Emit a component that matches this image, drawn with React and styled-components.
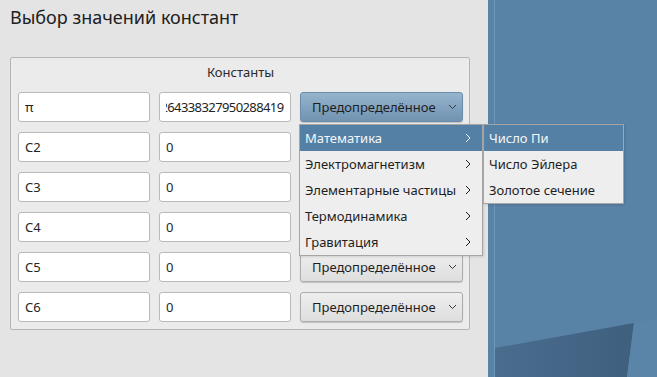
import { useEffect, useRef } from "react";
import styled, { createGlobalStyle } from "styled-components";

const GlobalStyle = createGlobalStyle`
    html, body {
        margin: 0;
        padding: 0;
        width: 657px;
        height: 377px;
        overflow: hidden;
    }
    body {
        font-family: "Noto Sans", "Open Sans", sans-serif;
        font-size: 13px;
        color: #232323;
    }
`;

const Screen = styled.div`
    display: flex;
    width: 657px;
    height: 377px;
`;

const Window = styled.div`
    width: 488px;
    flex-shrink: 0;
    background-color: #e4e4e4;
    padding: 5px 18px 0 10px;
    box-sizing: border-box;
`;

const Title = styled.h1`
    margin: 0;
    font-size: 18px;
    font-weight: normal;
    line-height: 25px;
    color: #202020;
`;

const GroupBox = styled.fieldset`
    margin: 27px 0 0 0;
    padding: 0 6px 0 7px;
    width: 460px;
    height: 273px;
    box-sizing: border-box;
    border: 1px solid #b5b5b5;
    border-radius: 2px;
    background-color: #ebebeb;
    display: flex;
    flex-direction: column;
    min-width: 0;
`;

const GroupTitle = styled.div`
    text-align: center;
    line-height: 18px;
    padding: 5px 0 11px 0;
    color: #2a2a2a;
`;

const Rows = styled.div`
    display: flex;
    flex-direction: column;
    gap: 10px;
`;

const Row = styled.div`
    display: flex;
    gap: 9px;
    align-items: center;
    position: relative;
`;

const Field = styled.input`
    width: 132px;
    height: 30px;
    flex-shrink: 0;
    box-sizing: border-box;
    border: 1px solid #b9b9b9;
    border-radius: 3px;
    background: #ffffff;
    padding: 0 6px;
    font-family: inherit;
    font-size: 13px;
    letter-spacing: ${(p) => (p.$tight ? "-0.6px" : "normal")};
    color: #232323;
    outline: none;
`;

const Combo = styled.div`
    position: relative;
    width: 163px;
    height: 30px;
    flex-shrink: 0;
    box-sizing: border-box;
    display: flex;
    align-items: center;
    justify-content: space-between;
    padding: 0 5px 0 11px;
    border-radius: 3px;
    border: 1px solid ${(p) => (p.$open ? "#6b8cab" : "#acacac")};
    background: ${(p) =>
        p.$open
            ? "linear-gradient(#95b4cd, #7193b1)"
            : "linear-gradient(#eeeeee, #dedede)"};
    box-shadow: 0 1px 1px rgba(0, 0, 0, 0.18);
    color: #1e1e1e;
`;

const Chevron = ({ dir = "down" }) =>
    dir === "down" ? (
        <svg width="9" height="6" viewBox="0 0 9 6">
            <path d="M1 1 L4.5 4.5 L8 1" fill="none" stroke="#3a3a3a" strokeWidth="1" />
        </svg>
    ) : (
        <svg width="6" height="10" viewBox="0 0 6 10">
            <path d="M1 1 L5 5 L1 9" fill="none" stroke="currentColor" strokeWidth="1" />
        </svg>
    );

const Menu = styled.div`
    position: absolute;
    z-index: 2;
    left: ${(p) => p.$left}px;
    top: ${(p) => p.$top}px;
    width: ${(p) => p.$width}px;
    background-color: #eeeeee;
    border: 1px solid #a6a6a6;
    box-sizing: border-box;
    box-shadow: 1px 1px 2px rgba(0, 0, 0, 0.12);
`;

const MenuItem = styled.div`
    height: 26px;
    display: flex;
    align-items: center;
    justify-content: space-between;
    padding: 0 11px 0 5px;
    color: ${(p) => (p.$active ? "#f4f7fa" : "#1e1e1e")};
    background-color: ${(p) => (p.$active ? "#5580a5" : "transparent")};
    white-space: nowrap;
`;

const Desktop = styled.div`
    flex: 1;
    position: relative;
    background-color: #5882a6;
    overflow: hidden;
`;

const Backdrop = styled.svg`
    position: absolute;
    inset: 0;
`;

const categories = [
    "Математика",
    "Электромагнетизм",
    "Элементарные частицы",
    "Термодинамика",
    "Гравитация",
];

const constants = ["Число Пи", "Число Эйлера", "Золотое сечение"];

const rows = [
    { name: "π", value: "3.14159265358979323846264338327950288419", open: true },
    { name: "C2", value: "0" },
    { name: "C3", value: "0" },
    { name: "C4", value: "0" },
    { name: "C5", value: "0" },
    { name: "C6", value: "0" },
];

const ValueField = ({ value }) => {
    const ref = useRef(null);
    useEffect(() => {
        if (ref.current) ref.current.scrollLeft = ref.current.scrollWidth;
    }, []);
    return <Field ref={ref} readOnly value={value} $tight={value.length > 12} />;
};

const App = () => {
    return (
        <>
            <GlobalStyle />
            <Screen>
                <Window>
                    <Title>Выбор значений констант</Title>
                    <GroupBox>
                        <GroupTitle>Константы</GroupTitle>
                        <Rows>
                            {rows.map((r) => (
                                <Row key={r.name}>
                                    <Field readOnly value={r.name} />
                                    <ValueField value={r.value} />
                                    <Combo $open={r.open}>
                                        Предопределённое
                                        <Chevron />
                                        {r.open && (
                                            <Menu $left={-2} $top={31} $width={184}>
                                                {categories.map((c, i) => (
                                                    <MenuItem key={c} $active={i === 0}>
                                                        {c}
                                                        <Chevron dir="right" />
                                                    </MenuItem>
                                                ))}
                                                <Menu $left={183} $top={-1} $width={141}>
                                                    {constants.map((c, i) => (
                                                        <MenuItem key={c} $active={i === 0}>
                                                            {c}
                                                        </MenuItem>
                                                    ))}
                                                </Menu>
                                            </Menu>
                                        )}
                                    </Combo>
                                </Row>
                            ))}
                        </Rows>
                    </GroupBox>
                </Window>
                <Desktop>
                    <Backdrop width="169" height="377" viewBox="0 0 169 377">
                        <defs>
                            <linearGradient id="shade" x1="0" x2="1" y1="0" y2="0">
                                <stop offset="0" stopColor="#4a6d8e" />
                                <stop offset="1" stopColor="#3f5f7e" />
                            </linearGradient>
                        </defs>
                        <rect x="6" y="0" width="1" height="377" fill="#6e97ba" />
                        <polygon points="7,348 146,323 139,377 7,377" fill="url(#shade)" />
                        <polygon points="146,323 169,318 169,377 139,377" fill="#5a85a9" />
                    </Backdrop>
                </Desktop>
            </Screen>
        </>
    );
};

export default App;
